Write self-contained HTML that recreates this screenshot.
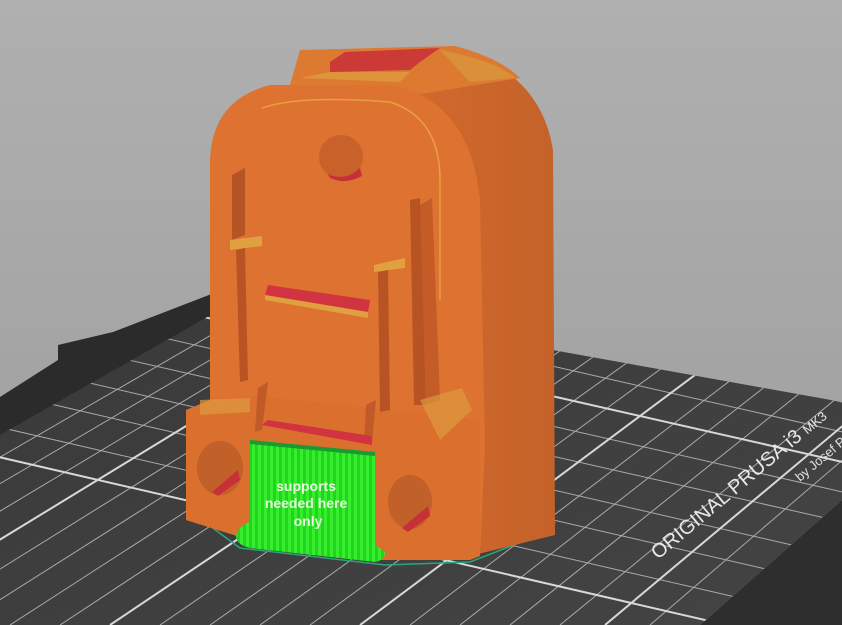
<!DOCTYPE html>
<html><head><meta charset="utf-8"><style>
html,body{margin:0;padding:0;background:#a8a8a8;width:842px;height:625px;overflow:hidden;}
svg{display:block}
</style></head><body>
<svg width="842" height="625" viewBox="0 0 842 625" xmlns="http://www.w3.org/2000/svg">
<defs>
<linearGradient id="bg" x1="0" y1="0" x2="0" y2="1"><stop offset="0" stop-color="#b0b0b0"/><stop offset="1" stop-color="#9c9c9c"/></linearGradient>
<linearGradient id="bed" x1="0" y1="0" x2="1" y2="1"><stop offset="0" stop-color="#393939"/><stop offset="1" stop-color="#444"/></linearGradient>
<clipPath id="bc"><polygon points="0,435 246,295 842,402 842,500 700,625 0,625"/></clipPath>
<linearGradient id="side" x1="0" y1="0" x2="1" y2="0"><stop offset="0" stop-color="#d26a2c"/><stop offset="1" stop-color="#c4622a"/></linearGradient>
<pattern id="gs" width="6" height="6" patternUnits="userSpaceOnUse"><rect width="6" height="6" fill="#22d422"/><rect width="3" height="6" fill="#36ee2c"/></pattern>
</defs>
<rect width="842" height="625" fill="url(#bg)"/>
<polygon points="0,397 58,360 58,345 113,332 240,283 260,290 0,440" fill="#2b2b2b"/>
<polygon points="700,625 842,500 842,625" fill="#2e2e2e"/>
<polygon points="0,435 246,295 842,402 842,500 700,625 0,625" fill="url(#bed)"/>
<g clip-path="url(#bc)" stroke="#d8d8d8" fill="none">
<g stroke-width="1" opacity="0.7">
<line x1="-400" y1="300" x2="900" y2="600"/>
<line x1="-400" y1="335" x2="900" y2="635"/>
<line x1="-400" y1="270" x2="900" y2="570"/>
<line x1="-400" y1="240" x2="900" y2="535"/>
<line x1="-400" y1="210" x2="900" y2="505"/>
<line x1="-400" y1="150" x2="900" y2="445"/>
<line x1="-400" y1="122" x2="900" y2="415"/>
<line x1="-400" y1="95" x2="900" y2="385"/>
<line x1="-400" y1="68" x2="900" y2="357"/>
<line x1="-400" y1="40" x2="900" y2="330"/>
<line x1="-400" y1="-20" x2="900" y2="275"/>
<line x1="-400" y1="-45" x2="900" y2="250"/>
<line x1="-400" y1="-70" x2="900" y2="225"/>
<line x1="2600" y1="-1047" x2="-340" y2="625"/>
<line x1="2600" y1="-1047" x2="-290" y2="625"/>
<line x1="2600" y1="-1047" x2="-240" y2="625"/>
<line x1="2600" y1="-1047" x2="-190" y2="625"/>
<line x1="2600" y1="-1047" x2="-90" y2="625"/>
<line x1="2600" y1="-1047" x2="-40" y2="625"/>
<line x1="2600" y1="-1047" x2="10" y2="625"/>
<line x1="2600" y1="-1047" x2="60" y2="625"/>
<line x1="2600" y1="-1047" x2="160" y2="625"/>
<line x1="2600" y1="-1047" x2="210" y2="625"/>
<line x1="2600" y1="-1047" x2="260" y2="625"/>
<line x1="2600" y1="-1047" x2="310" y2="625"/>
<line x1="2600" y1="-1047" x2="410" y2="625"/>
<line x1="2600" y1="-1047" x2="460" y2="625"/>
<line x1="2600" y1="-1047" x2="510" y2="625"/>
<line x1="2600" y1="-1047" x2="560" y2="625"/>
<line x1="2600" y1="-1047" x2="650" y2="625"/>
</g>
<g stroke-width="2">
<line x1="-400" y1="180" x2="900" y2="475"/>
<line x1="-400" y1="5" x2="900" y2="300"/>
<line x1="-400" y1="365" x2="900" y2="665"/>
<line x1="2600" y1="-1047" x2="-140" y2="625"/>
<line x1="2600" y1="-1047" x2="110" y2="625"/>
<line x1="2600" y1="-1047" x2="360" y2="625"/>
<line x1="2600" y1="-1047" x2="605" y2="625"/>
</g>
</g>
<text x="0" y="0" transform="translate(658,560) rotate(-40)" font-family="Liberation Sans, sans-serif" font-size="20" fill="#e8e8e8">ORIGINAL PRUSA i3 <tspan font-size="13">MK3</tspan></text>
<text x="0" y="0" transform="translate(800,482) rotate(-40)" font-family="Liberation Sans, sans-serif" font-size="13" fill="#e0e0e0">by Josef Prusa</text>
<path d="M195,515 L240,548 L385,565 L470,562 L552,530 L555,522" fill="none" stroke="#2aa57a" stroke-width="1.5"/>
<path d="M400,90 L452,48 Q540,70 553,150 L555,535 L470,556 L480,200 Q470,130 400,90 Z" fill="url(#side)"/>
<path d="M290,85 L300,50 L455,46 Q500,58 520,78 L415,95 Z" fill="#dc7a32"/>
<path d="M330,62 L345,52 L440,48 L420,62 L410,70 L330,72 Z" fill="#cc3a38"/>
<path d="M300,78 L330,72 L410,72 L400,82 Z" fill="#e0a040" opacity="0.7"/>
<path d="M440,50 Q495,60 515,78 L470,82 Z" fill="#d99a3a" opacity="0.7"/>
<path d="M210,400 L210,160 Q212,100 270,85 L390,85 Q470,100 480,200 L485,445 L480,556 L380,558 L250,540 L186,520 L186,410 Z" fill="#de7230"/>
<path d="M186,410 L250,395 L480,420 L480,556 L470,560 L380,560 L250,540 L186,520 Z" fill="#db6f2d"/>
<path d="M262,108 Q300,95 390,102 Q440,118 440,180 L440,300" fill="none" stroke="#e8a040" stroke-width="1.5"/>
<path d="M232,175 L245,168 L245,235 L232,240 Z" fill="#b65426"/>
<path d="M420,205 L432,198 L440,400 L426,405 Z" fill="#c45c28"/>
<path d="M410,200 L420,198 L426,405 L414,405 Z" fill="#b85424"/>
<path d="M230,240 L262,236 L262,246 L230,250 Z" fill="#e0a040"/>
<path d="M236,250 L245,248 L248,380 L240,382 Z" fill="#b85424"/>
<path d="M374,265 L405,258 L405,268 L374,272 Z" fill="#e0a040"/>
<path d="M378,272 L388,270 L390,410 L380,412 Z" fill="#b85424"/>
<path d="M265,295 L268,285 L370,300 L368,312 Z" fill="#d13440"/>
<path d="M265,295 L368,312 L368,318 L265,300 Z" fill="#e0a040"/>
<circle cx="341" cy="157" r="22" fill="#c8622a"/>
<path d="M328,174 Q345,182 360,168 L362,176 Q345,185 330,178 Z" fill="#c83038"/>
<path d="M258,388 L268,382 L262,430 L255,432 Z" fill="#c05a28"/>
<path d="M366,405 L376,400 L372,442 L364,444 Z" fill="#c05a28"/>
<path d="M262,425 L268,420 L372,436 L372,445 Z" fill="#d13440"/>
<path d="M200,400 L250,398 L250,412 L200,415 Z" fill="#e09a40" opacity="0.7"/>
<path d="M420,400 L462,388 L472,410 L440,440 Z" fill="#dda042" opacity="0.6"/>
<ellipse cx="220" cy="468" rx="23" ry="27" fill="#c2602a"/>
<path d="M212,492 L238,470 L240,480 L218,496 Z" fill="#c83038"/>
<ellipse cx="410" cy="502" rx="22" ry="27" fill="#c2602a"/>
<path d="M402,528 L428,506 L430,516 L408,532 Z" fill="#c83038"/>
<path d="M236,535 Q240,525 250,522 L250,440 L375,452 L375,545 L385,552 Q385,560 375,562 L250,548 Q236,545 236,535 Z" fill="url(#gs)"/>
<path d="M250,440 L375,452 L375,456 L250,444 Z" fill="#1a9a30"/>
<text font-family="Liberation Sans, sans-serif" font-weight="bold" font-size="14" fill="#e8f5e0" text-anchor="middle">
<tspan x="308" y="491">supports</tspan>
<tspan x="308" y="508">needed here</tspan>
<tspan x="308" y="526">only</tspan>
</text>
</svg>
</body></html>
